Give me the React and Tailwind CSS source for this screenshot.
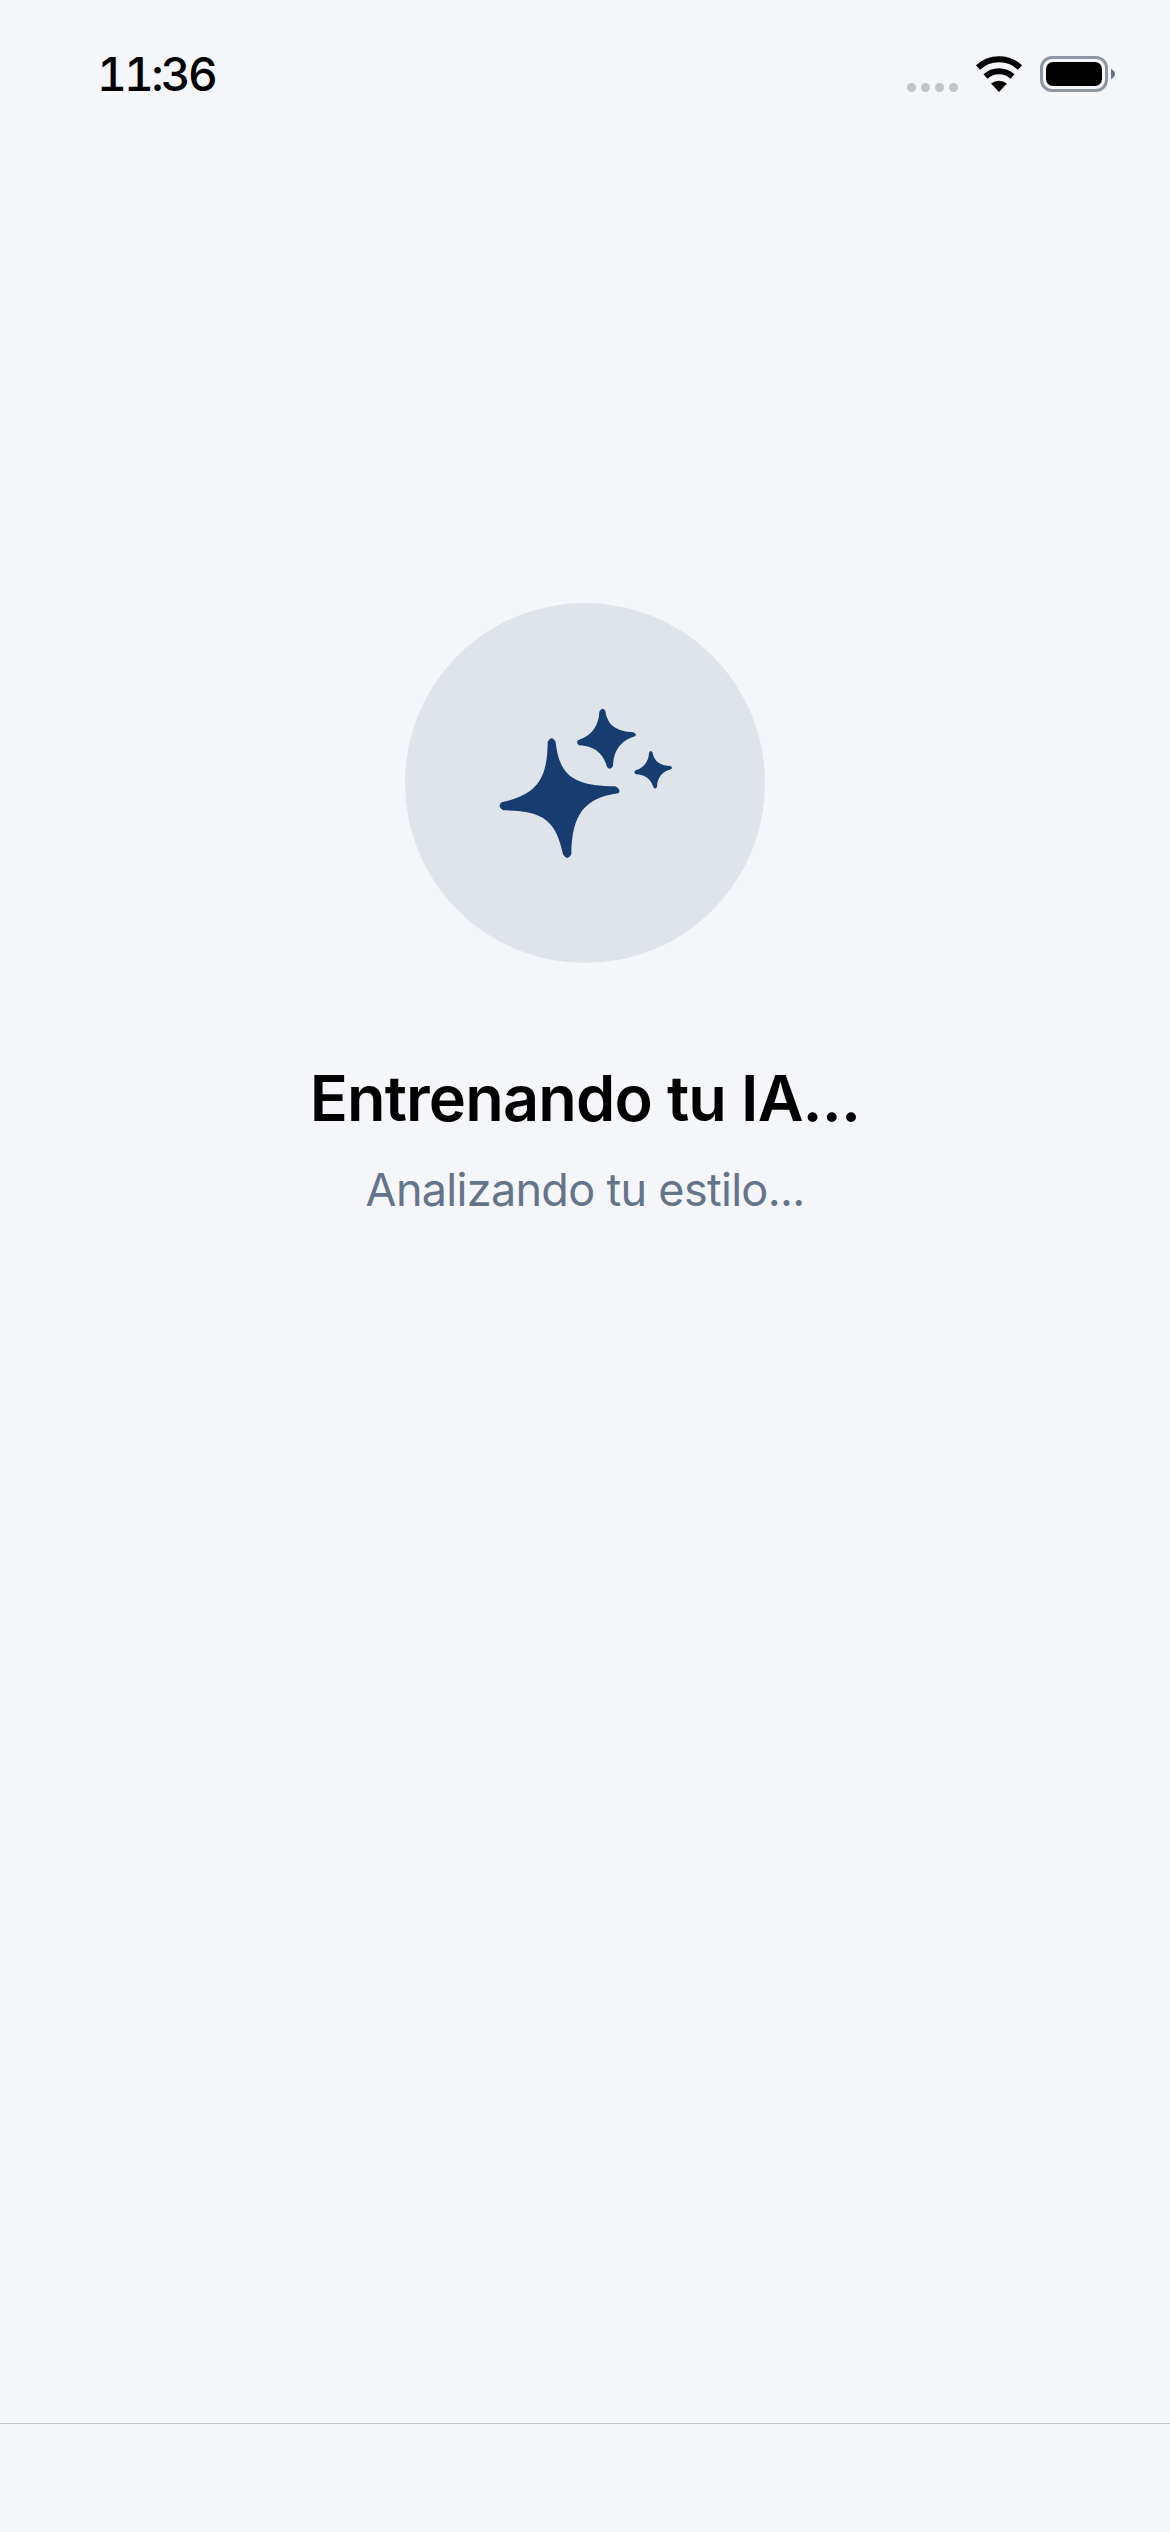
import React from 'react';

const font = "font-['Inter','Noto_Sans',sans-serif]";

const Sparkles = () => (
  <svg width="230" height="204" viewBox="0 0 690 612" fill="#163c70">
    <path d="M233 183 Q245 160 257 183 C268 290 318 314 435 316 Q455 326 445 337 C345 350 305 400 304 520 Q292 542 279 520 C258 415 215 388 100 388 Q80 376 95 364 C205 340 232 290 233 183 Z" />
    <path d="M388 92 Q397 76 406 90 C412 132 438 151 490 154 Q502 160 495 166 C452 178 430 210 429 255 Q420 270 411 258 C400 217 372 194 328 193 Q316 186 325 177 C368 163 387 130 388 92 Z" />
    <path d="M537 215 Q542 205 548 215 C553 243 573 254 602 255 Q609 260 603 265 C577 271 562 290 561 318 Q555 327 550 318 C543 295 524 280 498 280 Q489 274 497 268 C523 260 536 240 537 215 Z" />
  </svg>
);

const Wifi = () => (
  <svg width="48" height="37" viewBox="0 0 48 37" fill="none">
    <path d="M3 12.5 A31 31 0 0 1 45 12.5" stroke="#000" strokeWidth="6" />
    <path d="M10.5 21.5 A20 20 0 0 1 37.5 21.5" stroke="#000" strokeWidth="6" />
    <path d="M24 37 L16 28.5 Q24 23 32 28.5 Z" fill="#000" />
  </svg>
);

const StatusIcons = () => (
  <div className="flex items-start">
    <div className="flex gap-[5px] mt-[27px] mr-[17px]">
      {[0, 1, 2, 3].map((i) => (
        <div key={i} className="w-[9px] h-[9px] rounded-full bg-[#c1c4cb]" />
      ))}
    </div>
    <div className="mr-[17px] mt-[-1px]">
      <Wifi />
    </div>
    <div className="w-[68px] h-[36px] p-[3px] border-[3px] border-[#8e96a3] rounded-[12px]">
      <div className="w-full h-full bg-black rounded-[7px]" />
    </div>
    <svg className="ml-[3px] mt-[13px]" width="4" height="10" viewBox="0 0 4 10">
      <path d="M0 0 Q4 2 4 5 Q4 8 0 10 Z" fill="#64748b" />
    </svg>
  </div>
);

export default function App() {
  return (
    <div className={`${font} w-[1170px] h-[2532px] flex flex-col bg-[#f5f6f9]`}>
      <div className="h-[132px] shrink-0 flex items-start justify-between pl-[97px] pr-[55px] pt-[56px]">
        <span className="text-[46px] leading-[36px] font-medium text-black tabular-nums tracking-[-2.7px]">11:36</span>
        <StatusIcons />
      </div>

      <main className="flex-1 flex flex-col items-center pt-[471px]">
        <div className="w-[360px] h-[360px] rounded-full bg-[#dfe4ea] flex items-center justify-center">
          <Sparkles />
        </div>
        <h1 className="mt-[97px] text-[63px] leading-[76px] font-semibold tracking-[-0.85px] text-black">Entrenando tu IA...</h1>
        <p className="mt-[27px] text-[45px] leading-[54px] tracking-[-0.7px] text-[#64748b]">Analizando tu estilo...</p>
      </main>

      <div className="h-[109px] shrink-0 border-t border-[#c2c5ca]" />
    </div>
  );
}
